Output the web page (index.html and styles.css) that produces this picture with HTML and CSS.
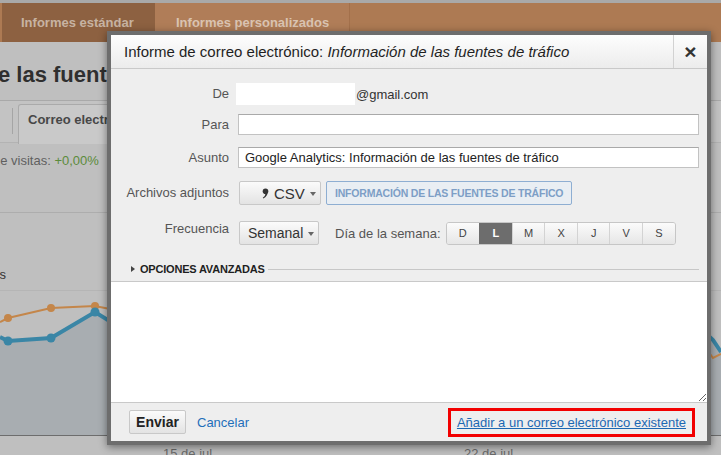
FILE: index.html
```html
<!DOCTYPE html>
<html lang="es">
<head>
    <meta charset="UTF-8">
    <title>Informe de correo electrónico</title>
    <link rel="stylesheet" href="styles.css">
</head>
<body>
    <div class="page">
        <div class="topStrip"></div>
        <div class="tabBar">
            <div class="tab tabOn">Informes estándar</div>
            <div class="tab tabOff">Informes personalizados</div>
        </div>
        <div class="heading">e las fuentes de tráfico</div>
        <div class="toolbar">
            <span class="sep"></span>
            <span class="tbBtn">Correo electrónico</span>
        </div>
        <div class="stats">de visitas: <span class="green">+0,00%</span></div>
        <svg class="chart" width="721" height="265" viewBox="0 0 721 265">
            <rect x="0" y="0" width="721" height="265" fill="#bfbfbf"/>
            <line x1="0" y1="22.5" x2="721" y2="22.5" stroke="#adadad"/>
            <line x1="0" y1="100.5" x2="721" y2="100.5" stroke="#b5b5b5"/>
            <line x1="0" y1="173.5" x2="721" y2="173.5" stroke="#b2b6b9"/>
            <path d="M0 147 L8 151 L51 148 L95 122 L140 150 L700 138 L713 150 L721 162 L721 245 L0 245 Z" fill="#a8adb1"/>
            <line x1="0" y1="245.5" x2="721" y2="245.5" stroke="#6d6d6d"/>
            <polyline points="0,132 8,128 51,118 95,116 140,125 700,150 713,168 721,164" fill="none" stroke="#c4864a" stroke-width="2"/>
            <g fill="#c4864a">
                <circle cx="8" cy="128" r="4"/>
                <circle cx="51" cy="118" r="4"/>
                <circle cx="95" cy="116" r="4"/>
            </g>
            <polyline points="0,147 8,151 51,148 95,122 140,150 700,138 713,150 721,162" fill="none" stroke="#3a86a6" stroke-width="4"/>
            <g fill="#3a86a6">
                <circle cx="8" cy="151" r="4.5"/>
                <circle cx="51" cy="148" r="4.5"/>
                <circle cx="95" cy="122" r="4.5"/>
            </g>
            <text x="6" y="89" text-anchor="end" class="legend">Visitas</text>
            <text x="163" y="268" class="axis">15 de jul</text>
            <text x="464" y="268" class="axis">22 de jul</text>
        </svg>
    </div>

    <div class="dialog">
        <div class="dlgHead">
            <div class="dlgTitle">Informe de correo electrónico: <i>Información de las fuentes de tráfico</i></div>
            <div class="dlgClose">&times;</div>
        </div>
        <div class="dlgForm">
            <div class="row rowFrom">
                <div class="label">De</div>
                <div class="ctrl">
                    <span class="fromBox"></span><span class="fromText">@gmail.com</span>
                </div>
            </div>
            <div class="row rowPara">
                <div class="label">Para</div>
                <div class="ctrl"><input class="field" type="text"></div>
            </div>
            <div class="row rowAsunto">
                <div class="label">Asunto</div>
                <div class="ctrl"><input class="field" type="text" value="Google Analytics: Información de las fuentes de tráfico"></div>
            </div>
            <div class="row rowFiles">
                <div class="label">Archivos adjuntos</div>
                <div class="ctrl">
                    <span class="btn btnCsv">
                        <svg class="csvIcon" width="7" height="11" viewBox="0 0 7 11">
                            <circle cx="3.5" cy="3.2" r="2.8" fill="#333"/>
                            <path d="M5.6 3.5 Q6 8 1.2 10.6 L0.8 9.8 Q3.4 8 3.6 5.2 Z" fill="#333"/>
                        </svg>
                        CSV<span class="caret"></span>
                    </span>
                    <span class="fileTag">Información de las fuentes de tráfico</span>
                </div>
            </div>
            <div class="row rowFreq">
                <div class="label">Frecuencia</div>
                <div class="ctrl">
                    <span class="btn btnFreq">Semanal<span class="caret"></span></span>
                    <span class="dayLabel">Día de la semana:</span>
                    <div class="days">
                        <span>D</span>
                        <span class="on">L</span>
                        <span>M</span>
                        <span>X</span>
                        <span>J</span>
                        <span>V</span>
                        <span>S</span>
                    </div>
                </div>
            </div>
            <div class="advanced">
                <span class="arrow"></span>
                <span class="advText">Opciones avanzadas</span>
                <span class="advLine"></span>
            </div>
        </div>
        <textarea class="message"></textarea>
        <div class="dlgFoot">
            <span class="btn btnSend">Enviar</span>
            <a class="cancel" href="#">Cancelar</a>
            <span class="highlight"><a class="addLink" href="#">Añadir a un correo electrónico existente</a></span>
        </div>
    </div>
</body>
</html>
```

FILE: styles.css
```css
*{padding:0;margin:0;box-sizing:border-box;}
body{width:721px;height:455px;overflow:hidden;position:relative;background:#bfbfbf;
font-family:"Liberation Sans",Arial,sans-serif;font-size:13px;color:#333;}

/* page behind the dialog */
.page{width:721px;}
.topStrip{height:3px;background:#a9a9a9;}
.tabBar{height:39px;background:#ad7a53;display:flex;padding-left:2px;}
.tab{font-weight:bold;font-size:13px;line-height:39px;}
.tabOn{width:153px;background:#8d6141;color:#c7b3a2;padding-left:19px;}
.tabOff{width:195px;background:#b07d58;color:#dac4b2;padding-left:21px;border-right:1px solid #a3704b;}
.heading{height:59px;border-bottom:1px solid #a9a9a9;font-weight:bold;font-size:22px;color:#2f2f2f;
padding-top:20px;white-space:nowrap;margin-left:-2px;}
.toolbar{height:42px;border-bottom:1px solid #b3b3b3;display:flex;align-items:flex-start;padding-top:3px;background:#c3c3c3;}
.sep{width:1px;height:26px;background:#a5a5a5;margin:4px 5px 0 12px;}
.tbBtn{height:40px;padding:7px 0 0 9px;width:100px;background:#c9c9c9;border:1px solid #aaa;border-bottom:0;
border-radius:3px 3px 0 0;font-weight:bold;color:#474747;white-space:nowrap;overflow:hidden;}
.stats{height:47px;padding-top:10px;margin-left:-7px;color:#5f5f5f;white-space:nowrap;}
.green{color:#5b8b3b;}
.chart{display:block;}
.legend{font-family:"Liberation Sans",Arial,sans-serif;font-size:13px;fill:#333;}
.axis{font-family:"Liberation Sans",Arial,sans-serif;font-size:13px;fill:#6a6a6a;}

/* dialog */
.dialog{position:absolute;left:107px;top:31px;width:604px;height:414px;border:4px solid #6d6d6d;
background:#eeeeee;display:flex;flex-direction:column;box-shadow:0 2px 8px rgba(0,0,0,.45);}
.dlgHead{height:34px;display:flex;border-bottom:1px solid #c9c9c9;background:linear-gradient(#fdfdfd,#ececec);flex-shrink:0;}
.dlgTitle{flex:1;padding-left:13px;line-height:33px;font-size:15px;color:#1f1f1f;white-space:nowrap;}
.dlgClose{width:34px;border-left:1px solid #d2d2d2;text-align:center;line-height:33px;font-size:21px;font-weight:bold;color:#333;}

.dlgForm{height:212px;padding:14px 8px 0 0;flex-shrink:0;}
.row{display:flex;align-items:center;}
.label{width:118px;text-align:right;color:#555;line-height:16px;flex-shrink:0;}
.ctrl{flex:1;display:flex;align-items:center;margin-left:9px;}
.rowFrom{height:22px;}
.rowPara{height:21px;margin-top:9px;}
.rowAsunto{height:21px;margin-top:12px;}
.rowFiles{height:24px;margin-top:13px;}
.rowFreq{height:24px;margin-top:16px;}
.rowFreq .label{align-self:flex-start;}

.fromBox{width:119px;height:22px;background:#fff;margin-left:-2px;}
.fromText{color:#333;margin-left:1px;}
.field{width:100%;height:21px;border:1px solid #c2c2c2;border-top-color:#a9a9a9;background:#fff;
font-family:"Liberation Sans",Arial,sans-serif;font-size:13px;color:#222;padding:0 6px;outline:none;}

.btn{display:inline-flex;align-items:center;height:24px;border:1px solid #c8c8c8;border-radius:2px;
background:linear-gradient(#fbfbfb,#e3e3e3);color:#333;}
.caret{display:inline-block;width:0;height:0;border-left:3.5px solid transparent;border-right:3.5px solid transparent;
border-top:4px solid #666;margin-left:5px;margin-top:2px;}
.btnCsv{width:82px;margin-left:1px;padding-left:22px;font-size:15px;}
.csvIcon{margin-right:5px;margin-top:1px;}
.fileTag{height:24px;margin-left:5px;padding:0 8px;border:1px solid #8eaed2;border-radius:2px;background:#e9eef3;
color:#7d9ec6;font-weight:bold;font-size:10.5px;letter-spacing:-.2px;line-height:22px;text-transform:uppercase;white-space:nowrap;}
.btnFreq{width:80px;margin-left:1px;padding-left:8px;font-size:14px;}
.dayLabel{margin-left:16px;color:#555;}
.days{display:flex;margin-left:5px;border:1px solid #c6c6c6;border-radius:3px;overflow:hidden;height:23px;}
.days span{width:32.6px;text-align:center;line-height:21px;font-size:11px;color:#444;border-left:1px solid #d3d3d3;
background:linear-gradient(#fbfbfb,#e6e6e6);}
.days span:first-child{border-left:0;}
.days span.on{background:#6d6d6d;color:#fff;border-left-color:#6d6d6d;font-weight:bold;}

.advanced{display:flex;align-items:center;margin-top:17px;padding-left:20px;height:14px;}
.arrow{width:0;height:0;border-top:3px solid transparent;border-bottom:3px solid transparent;border-left:4px solid #444;margin-right:5px;}
.advText{font-weight:bold;font-size:11px;letter-spacing:-.2px;text-transform:uppercase;color:#1f1f1f;}
.advLine{flex:1;height:1px;background:#c7c7c7;margin-left:3px;}

.message{display:block;width:100%;height:122px;border:0;border-top:1px solid #c9c9c9;border-bottom:1px solid #c9c9c9;
background:#fff;resize:vertical;outline:none;flex-shrink:0;}

.dlgFoot{flex:1;display:flex;align-items:center;padding:0 12px 0 18px;}
.btnSend{width:57px;justify-content:center;font-weight:bold;font-size:14px;color:#222;}
.cancel{margin-left:11px;color:#1f6fba;text-decoration:none;font-size:13px;}
.highlight{margin-left:auto;border:3px solid #f20000;height:29px;padding:0 6px;display:flex;align-items:center;}
.addLink{color:#1c68b3;font-size:13px;}
```
